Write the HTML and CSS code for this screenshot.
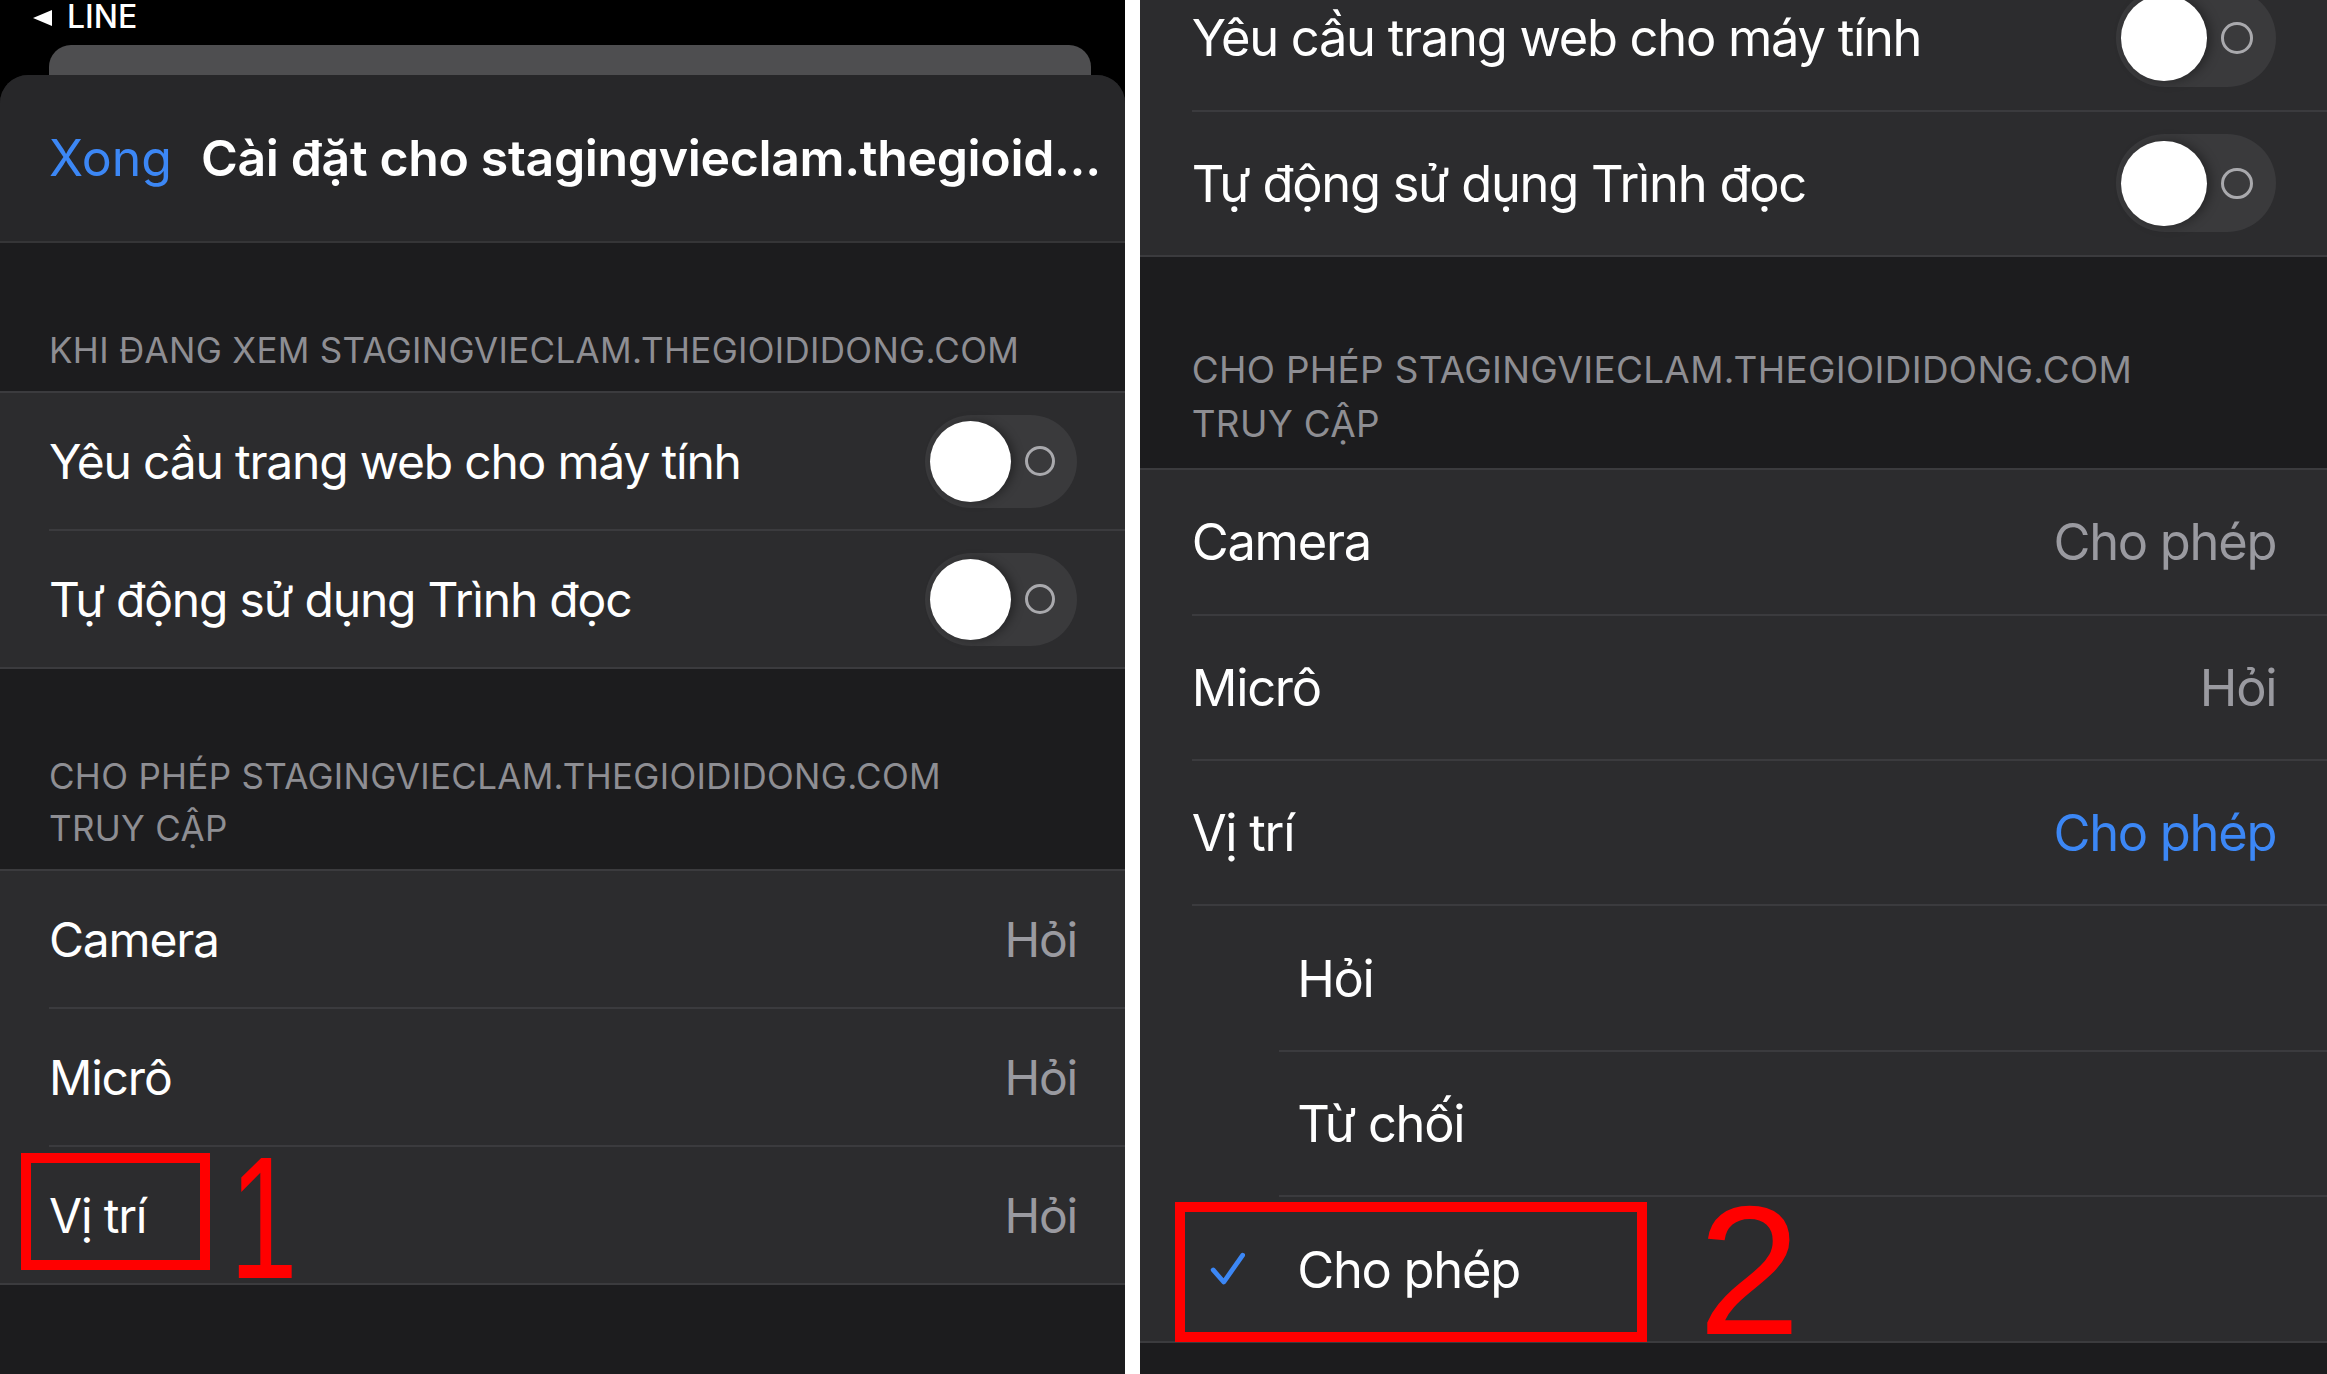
FILE: index.html
```html
<!DOCTYPE html>
<html lang="vi">
<head>
  <meta charset="UTF-8" />
  <meta name="viewport" content="width=device-width, initial-scale=1.0"/>
  <title>Cài đặt trang web - Safari</title>
  <link rel="stylesheet" href="styles.css">
</head>
<body>

<div class="screens">

  <!-- Step 1 -->
  <div class="phone phone-left">
    <div class="status-bar">
      <span class="back-arrow"></span>
      <span class="back-app">LINE</span>
    </div>
    <div class="sheet-behind"></div>

    <div class="sheet">
      <div class="sheet-header">
        <span class="done">Xong</span>
        <span class="sheet-title">Cài đặt cho stagingvieclam.thegioid...</span>
      </div>

      <div class="section-title">KHI ĐANG XEM STAGINGVIECLAM.THEGIOIDIDONG.COM</div>
      <div class="group">
        <div class="row">
          <span class="label">Yêu cầu trang web cho máy tính</span>
          <span class="switch"><span class="knob"></span><span class="off-ring"></span></span>
        </div>
        <div class="row">
          <span class="label">Tự động sử dụng Trình đọc</span>
          <span class="switch"><span class="knob"></span><span class="off-ring"></span></span>
        </div>
      </div>

      <div class="section-title">CHO PHÉP STAGINGVIECLAM.THEGIOIDIDONG.COM<br>TRUY CẬP</div>
      <div class="group">
        <div class="row">
          <span class="label">Camera</span>
          <span class="value">Hỏi</span>
        </div>
        <div class="row">
          <span class="label">Micrô</span>
          <span class="value">Hỏi</span>
        </div>
        <div class="row">
          <span class="label">Vị trí</span>
          <span class="value">Hỏi</span>
          <span class="mark mark-one"></span>
          <span class="step step-one">1</span>
        </div>
      </div>
    </div>
  </div>

  <!-- Step 2 -->
  <div class="phone phone-right">
    <div class="group">
      <div class="row">
        <span class="label">Yêu cầu trang web cho máy tính</span>
        <span class="switch"><span class="knob"></span><span class="off-ring"></span></span>
      </div>
      <div class="row">
        <span class="label">Tự động sử dụng Trình đọc</span>
        <span class="switch"><span class="knob"></span><span class="off-ring"></span></span>
      </div>
    </div>

    <div class="section-title">CHO PHÉP STAGINGVIECLAM.THEGIOIDIDONG.COM<br>TRUY CẬP</div>
    <div class="group">
      <div class="row">
        <span class="label">Camera</span>
        <span class="value">Cho phép</span>
      </div>
      <div class="row">
        <span class="label">Micrô</span>
        <span class="value">Hỏi</span>
      </div>
      <div class="row">
        <span class="label">Vị trí</span>
        <span class="value selected">Cho phép</span>
      </div>
      <div class="row option">
        <span class="check"></span>
        <span class="label">Hỏi</span>
      </div>
      <div class="row option">
        <span class="check"></span>
        <span class="label">Từ chối</span>
      </div>
      <div class="row option">
        <span class="check">
          <svg width="34" height="32" viewBox="0 0 34 32"><path d="M3 17 L13 28.5 L31 3" fill="none" stroke="#3c87f5" stroke-width="4.5" stroke-linecap="round" stroke-linejoin="round"/></svg>
        </span>
        <span class="label">Cho phép</span>
        <span class="mark mark-two"></span>
        <span class="step step-two">2</span>
      </div>
    </div>
  </div>

</div>

</body>
</html>
```

FILE: styles.css
```css
body {
  margin: 0;
  background-color: #fff;
  font-family: 'Inter', 'Noto Sans', sans-serif;
  color: #fff;
}

.screens {
  display: flex;
  gap: 15px;
  height: 1374px;
  overflow: hidden;
}

.phone {
  display: flex;
  flex-direction: column;
  flex-shrink: 0;
  width: 1125px;
  background-color: #1c1c1e;
  overflow: hidden;
}

.phone-left {
  height: 1374px;
  background-color: #000;
}

/* second screenshot is blown up a little */
.phone-right {
  zoom: 1.055;
  height: 1303px;
}

.phone-right .group:first-child {
  margin-top: -34px;
}

/* status bar + stacked sheets */
.status-bar {
  display: flex;
  align-items: flex-start;
  height: 45px;
  padding-left: 33px;
}

.back-arrow {
  width: 0;
  height: 0;
  margin-top: 10px;
  margin-right: 15px;
  border-top: 8px solid transparent;
  border-bottom: 8px solid transparent;
  border-right: 19px solid #fff;
}

.back-app {
  padding-top: 1px;
  font-size: 32px;
  line-height: 32px;
  font-weight: 500;
}

.sheet-behind {
  height: 30px;
  margin: 0 34px 0 49px;
  border-radius: 22px 22px 0 0;
  background-color: #4e4e50;
}

.sheet {
  flex: 1;
  border-radius: 28px 28px 0 0;
  background-color: #1c1c1e;
  overflow: hidden;
}

.sheet-header {
  display: flex;
  align-items: center;
  gap: 29px;
  height: 166px;
  padding: 0 49px;
  background-color: #272729;
  border-bottom: 2px solid #353537;
  white-space: nowrap;
}

.done {
  font-size: 50px;
  color: #3c87f5;
}

.sheet-title {
  font-size: 50px;
  font-weight: 600;
  letter-spacing: -0.35px;
}

/* grouped list */
.section-title {
  padding: 81px 49px 15px;
  font-size: 35px;
  line-height: 52px;
  letter-spacing: 0.3px;
  color: #8e8e93;
}

.group {
  background-color: #2c2c2e;
  border-top: 2px solid #3b3b3e;
  border-bottom: 2px solid #3b3b3e;
}

.row {
  position: relative;
  display: flex;
  align-items: center;
  justify-content: space-between;
  height: 136px;
  margin-left: 49px;
  padding-right: 48px;
  border-bottom: 2px solid #3b3b3e;
}

.row:last-child {
  border-bottom: none;
}

.label,
.value {
  font-size: 48px;
  letter-spacing: -0.025em;
}

.value {
  color: #9a9aa0;
}

.value.selected {
  color: #3c87f5;
}

.row.option {
  justify-content: flex-start;
  margin-left: 132px;
}

.check {
  display: flex;
  width: 34px;
  height: 32px;
  margin-left: -66px;
  margin-right: 49px;
}

/* switch, off state */
.switch {
  display: flex;
  align-items: center;
  width: 152px;
  height: 93px;
  padding: 0 5px;
  box-sizing: border-box;
  border-radius: 47px;
  background-color: #3a3a3c;
}

.knob {
  width: 81px;
  height: 81px;
  border-radius: 50%;
  background-color: #fff;
  box-shadow: 4px 0 10px rgba(0, 0, 0, 0.35);
}

.off-ring {
  width: 30px;
  height: 30px;
  margin-left: 14px;
  box-sizing: border-box;
  border: 3px solid #a9a9ad;
  border-radius: 50%;
}

/* red annotations drawn on top of the screenshots */
.mark {
  position: absolute;
  box-sizing: border-box;
  border: 10px solid #ff0000;
}

.mark-one {
  left: -28px;
  top: 6px;
  width: 189px;
  height: 117px;
}

.mark-two {
  left: -99px;
  top: 4px;
  width: 448px;
  height: 133px;
}

.step {
  position: absolute;
  font-family: 'Liberation Sans', Arial, sans-serif;
  font-size: 175px;
  line-height: 1;
  color: #ff0000;
}

.step-one {
  left: 166px;
  top: -17px;
  transform: scaleX(0.7);
}

.step-two {
  left: 397px;
  top: -18px;
}
```
